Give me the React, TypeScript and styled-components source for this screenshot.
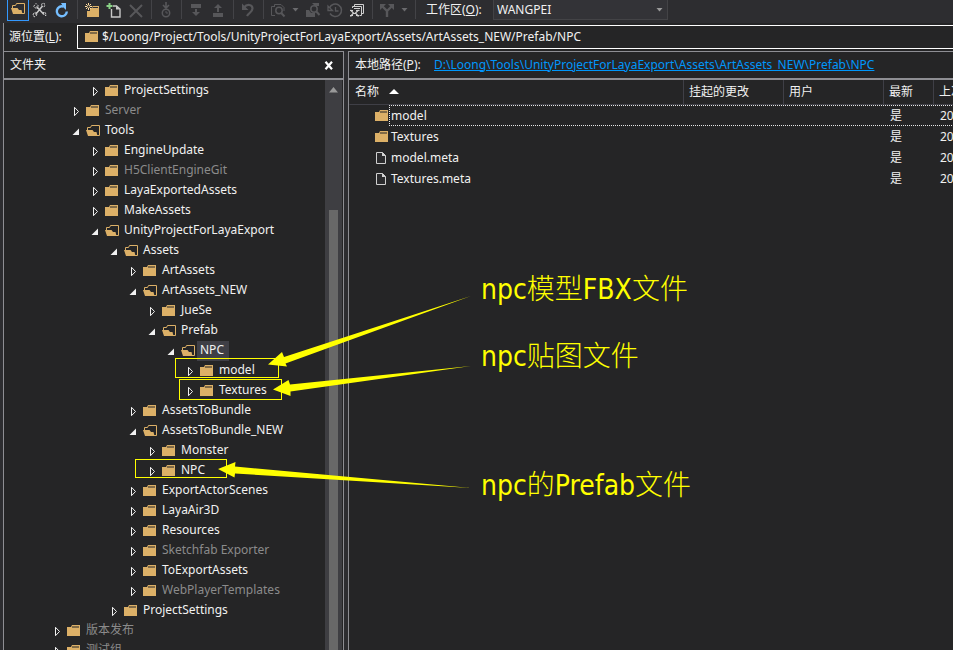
import React from "react";
import styled, { createGlobalStyle, css } from "styled-components";

const GlobalStyle = createGlobalStyle`
  * { box-sizing: border-box; }
  html, body { margin: 0; padding: 0; background: #252526; overflow: hidden; }
  body, button, input, select, table {
    font-family: "Noto Sans", "Noto Sans CJK SC", sans-serif;
    font-size: 12px;
    line-height: 16px;
    color: #f1f1f1;
  }
  button { border: 0; padding: 0; background: none; }
`;

const Shell = styled.div`
  position: relative;
  display: flex;
  flex-direction: column;
  height: 100vh;
  overflow: hidden;
  background: #2d2d30;
`;

const Toolbar = styled.div`
  display: flex;
  align-items: flex-start;
  flex: none;
  height: 23px;
  padding-left: 7px;
  overflow: hidden;
`;

const ToolButton = styled.button<{ $active?: boolean }>`
  display: flex;
  align-items: center;
  justify-content: center;
  flex: none;
  width: 22px;
  height: 19px;
  ${(p) =>
    p.$active &&
    css`
      height: 21px;
      padding-bottom: 2px;
      border: 1px solid #3399ff;
      border-top: 0;
    `}
`;

const CaretButton = styled(ToolButton)`
  width: 13px;
`;

const Separator = styled.span`
  flex: none;
  width: 1px;
  height: 19px;
  margin: 0 3px 0 4px;
  background: #434347;
`;

const WorkspaceLabel = styled.label`
  flex: none;
  width: 67px;
  margin-left: 7px;
  padding-top: 2px;
  white-space: nowrap;
`;

const SelectBox = styled.div`
  display: flex;
  align-items: center;
  flex: none;
  width: 175px;
  height: 20px;
  padding-right: 4px;
  background: #333337;
  border: 1px solid #434346;
  border-top: 0;
`;

const Select = styled.select`
  appearance: none;
  flex: 1;
  min-width: 0;
  padding: 0 3px;
  border: 0;
  outline: 0;
  background: transparent;
`;

const SourceBar = styled.div`
  display: flex;
  align-items: flex-start;
  flex: none;
  height: 28px;
  margin-left: 3px;
  padding: 2px 0 0 5px;
  border-left: 1px solid #8e8e93;
  background: #252526;
`;

const SourceLabel = styled.label`
  width: 68px;
  padding-top: 4px;
`;

const SourceField = styled.div`
  display: flex;
  align-items: center;
  flex: 1;
  gap: 3px;
  height: 24px;
  padding-left: 7px;
  border: 1px solid #ffffff;
  border-right: 0;
`;

const SourceInput = styled.input`
  flex: 1;
  min-width: 0;
  padding: 0;
  border: 0;
  outline: 0;
  background: transparent;
`;

const Panes = styled.div`
  display: flex;
  flex: 1;
  gap: 4px;
  min-height: 0;
  padding-left: 3px;
`;

const Pane = styled.section`
  display: flex;
  flex-direction: column;
  min-width: 0;
  border-left: 1px solid #8e8e93;
  border-top: 1px solid #8e8e93;
  background: #252526;
`;

const FolderPane = styled(Pane)`
  flex: none;
  width: 341px;
  border-right: 1px solid #8e8e93;
`;

const FilePane = styled(Pane)`
  flex: 1;
`;

const PaneHeader = styled.header`
  display: flex;
  align-items: center;
  flex: none;
  height: 28px;
  padding: 0 9px 1px 6px;
  border-bottom: 2px solid #8e8e93;
  white-space: nowrap;
`;

const PaneTitle = styled.h2`
  flex: 1;
  margin: 0;
  font-size: 12px;
  font-weight: 400;
`;

const CloseButton = styled.button`
  display: flex;
  padding-top: 2px;
`;

const PathLabel = styled.span`
  width: 79px;
`;

const PathLink = styled.a`
  color: #0097fb;
  text-decoration: underline;
`;

const TreeArea = styled.div`
  display: flex;
  flex: 1;
  min-height: 0;
  padding-right: 1px;
`;

const Tree = styled.ul`
  flex: 1;
  margin: 0;
  padding: 1px 0 0;
  overflow: hidden;
  list-style: none;
`;

const TreeItem = styled.li<{ $depth: number; $muted?: boolean }>`
  display: flex;
  align-items: center;
  height: 20px;
  padding-left: ${(p) => 49 + p.$depth * 19}px;
  color: ${(p) => (p.$muted ? "#8b8b8b" : "#f1f1f1")};
  white-space: nowrap;
`;

const Expander = styled.button`
  display: flex;
  width: 14px;
`;

const TreeName = styled.span<{ $selected?: boolean }>`
  height: 20px;
  padding: 1px 5px 0 3px;
  margin-left: 2px;
  background: ${(p) => (p.$selected ? "#3f3f46" : "transparent")};
`;

const ScrollTrack = styled.div`
  display: flex;
  flex-direction: column;
  align-items: center;
  width: 17px;
  padding-top: 7px;
  background: #3e3e42;
`;

const ScrollThumb = styled.div`
  flex: 1;
  width: 9px;
  margin-top: 117px;
  background: #686868;
`;

const FileTable = styled.table`
  width: 100%;
  table-layout: fixed;
  border-collapse: separate;
  border-spacing: 0;
`;

const HeadCell = styled.th<{ $width?: number }>`
  width: ${(p) => (p.$width ? `${p.$width}px` : "auto")};
  height: 25px;
  padding: 0 0 0 5px;
  border-left: 1px solid #3f3f46;
  border-bottom: 1px solid #3f3f46;
  font-weight: 400;
  text-align: left;
  white-space: nowrap;
  overflow: hidden;
  &:first-child { border-left-color: transparent; }
`;

const SortMark = styled.svg`
  margin-left: 10px;
  vertical-align: 2px;
`;

const Cell = styled.td<{ $focused?: boolean }>`
  height: 21px;
  padding: 0 0 0 7px;
  overflow: hidden;
  white-space: nowrap;
  ${(p) =>
    p.$focused &&
    css`
      background:
        repeating-linear-gradient(90deg, #e6e6e6 0 1px, transparent 1px 2px) 0 0 / 100% 1px no-repeat,
        repeating-linear-gradient(90deg, #e6e6e6 0 1px, transparent 1px 2px) 0 20px / 100% 1px no-repeat;
    `}
`;

const NameCell = styled(Cell)`
  padding: 0 0 0 26px;
  background: none;
`;

const NameBox = styled.div`
  display: flex;
  align-items: center;
  height: 21px;
`;

const FileName = styled.span<{ $focused?: boolean }>`
  flex: 1;
  height: 21px;
  padding: 3px 0 0 2px;
  ${(p) =>
    p.$focused &&
    css`
      background:
        repeating-linear-gradient(90deg, #e6e6e6 0 1px, transparent 1px 2px) 0 0 / 100% 1px no-repeat,
        repeating-linear-gradient(90deg, #e6e6e6 0 1px, transparent 1px 2px) 0 20px / 100% 1px no-repeat,
        repeating-linear-gradient(180deg, #e6e6e6 0 1px, transparent 1px 2px) 0 0 / 1px 100% no-repeat;
    `}
`;

const Markup = styled.svg`
  position: absolute;
  left: 0;
  top: 0;
  pointer-events: none;
`;

const Callout = styled.p<{ $x: number; $y: number }>`
  position: absolute;
  left: ${(p) => p.$x}px;
  top: ${(p) => p.$y}px;
  margin: 0;
  color: #ffff00;
  font-family: "DejaVu Sans Condensed", "Noto Sans", sans-serif;
  font-size: 28px;
  line-height: 40px;
  white-space: nowrap;
`;

const Thin = styled.span`
  font-family: "Noto Sans CJK SC Light", "Noto Sans CJK SC", sans-serif;
  font-weight: 300;
`;

const GOLD = "#dcb067";

const FolderClosed = () => (
  <svg width="14" height="12" viewBox="0 0 14 12" aria-hidden="true">
    <path d="M0 2H4L5 0H13V11H0Z" fill={GOLD} />
    <path d="M5 1.5H12V2.5H5Z" fill="#252526" />
  </svg>
);

const FolderOpen = () => (
  <svg width="14" height="12" viewBox="0 0 14 12" aria-hidden="true">
    <path d="M1.5 6V2.500H4.500L5.500 .5H13.500V10.500H11" fill="none" stroke={GOLD} />
    <path d="M0 5H6.500L8 7H10.500L11.500 11H2Z" fill={GOLD} />
  </svg>
);

const FileIcon = () => (
  <svg width="14" height="12" viewBox="0 0 14 12" aria-hidden="true">
    <path d="M1.5 .5H7.5L10.5 3.5V11.5H1.5Z" fill="#2b2b2d" stroke="#d0d0d0" />
    <path d="M7 0V4H11Z" fill="#d0d0d0" />
  </svg>
);

const Caret = ({ color = "#999999" }: { color?: string }) => (
  <svg width="7" height="4" viewBox="0 0 7 4" aria-hidden="true">
    <path d="M.5 0H6.5L3.5 3.5Z" fill={color} />
  </svg>
);

const Twisty = ({ open }: { open?: boolean }) => (
  <svg width="8" height="10" viewBox="0 0 8 10" aria-hidden="true">
    {open ? (
      <path d="M7 2.500V9H.5Z" fill="#f1f1f1" />
    ) : (
      <path d="M2.500 1.300V9.700L6.500 5.500Z" fill="none" stroke="#f1f1f1" />
    )}
  </svg>
);

const Icon = ({ children }: { children: React.ReactNode }) => (
  <svg width="16" height="16" viewBox="0 0 16 16" fill="none" aria-hidden="true">
    {children}
  </svg>
);

const DIM = "#57575a";

const ToolsIcon = () => (
  <Icon>
    <path d="M3.500 12.500L10.500 4M4.500 4.500L12 12.500" stroke="#c8c8c8" strokeWidth="1.5" />
    <path d="M1.5 4.5L4 1.5L6.500 4L5 7ZM9 2.5L12 1L13 4L11 5ZM10.500 10.500L13.500 10.500L14 14ZM1 12L4 10L5 13L2 15Z" stroke="#c8c8c8" strokeDasharray="2 1" />
  </Icon>
);

const RefreshIcon = () => (
  <Icon>
    <path d="M12.8 9.5A5 5 0 1 1 9.5 4.6" stroke="#75beff" strokeWidth="2.4" />
    <path d="M7 1H12V8L9.5 5.5Z" fill="#75beff" />
  </Icon>
);

const NewFolderIcon = () => (
  <Icon>
    <path d="M3 9V15H15V4H8.500V6H6V9Z" fill={GOLD} />
    <path d="M9 5.500H14" stroke="#2d2d30" />
    <path d="M4.500 1V8M1 4.500H8M2 2L7 7M7 2L2 7" stroke="#ffdda0" />
    <circle cx="4.500" cy="4.500" r="1.2" fill="#2d2d30" />
  </Icon>
);

const NewFileIcon = () => (
  <Icon>
    <path d="M5.5 7V15H14V7L10.5 4H7" stroke="#c8c8c8" strokeWidth="1.4" />
    <path d="M10 3.500V7.500H14Z" fill="#c8c8c8" />
    <path d="M3.5 1V7M.5 4H6.500" stroke="#89d185" strokeWidth="2" />
  </Icon>
);

const DeleteIcon = () => (
  <Icon>
    <path d="M2 3L14 15M14 3L2 15" stroke={DIM} strokeWidth="2" />
  </Icon>
);

const PendingIcon = () => (
  <Icon>
    <circle cx="8" cy="11" r="3.7" stroke={DIM} strokeWidth="1.5" />
    <path d="M8 9V11H10" stroke={DIM} />
    <path d="M8 0V5M5 3L8 6L11 3" stroke={DIM} strokeWidth="1.6" />
  </Icon>
);

const GetIcon = () => (
  <Icon>
    <path d="M3 2H13V6H3ZM7 7H9V10H12L8 14L4 10H7Z" fill={DIM} />
  </Icon>
);

const CheckInIcon = () => (
  <Icon>
    <path d="M3 11H13V15H3ZM8 2L12 6H9V10H7V6H4Z" fill={DIM} />
  </Icon>
);

const UndoIcon = () => (
  <Icon>
    <path d="M4 5.500C7 1.500 12.500 2.500 12.5 6.500C12.500 10 8.500 11 7 14" stroke={DIM} strokeWidth="2.2" />
    <path d="M2 1.500V8H8.500Z" fill={DIM} />
  </Icon>
);

const FindIcon = () => (
  <Icon>
    <path d="M5 13.500H1.5V4.5H4M4.5 5V2.5H11L14 5.5V9" stroke={DIM} />
    <circle cx="9" cy="8.5" r="3.2" stroke={DIM} strokeWidth="1.5" />
    <path d="M11.3 11L14.5 14.5" stroke={DIM} strokeWidth="2" />
  </Icon>
);

const FindFolderIcon = () => (
  <Icon>
    <path d="M1 8H4L6 11H10V15H1ZM7 1H14V4H10Z" fill={DIM} />
    <circle cx="9" cy="7" r="3.2" stroke={DIM} strokeWidth="1.5" />
    <path d="M11.3 9.5L14.5 13" stroke={DIM} strokeWidth="2" />
  </Icon>
);

const HistoryIcon = () => (
  <Icon>
    <path d="M2.500 6A6.200 6.200 0 1 1 3 11.500" stroke={DIM} strokeWidth="1.5" />
    <path d="M1 4V8.500H5.500ZM8.500 5V9H11.500" stroke={DIM} strokeWidth="1.3" />
  </Icon>
);

const CompareIcon = () => (
  <Icon>
    <path d="M3.5 6V4.500H12.500V13.500H11M5.500 4V2.500H14.500V11.500H13" stroke="#d0d0d0" />
    <path d="M5 6.500H11" stroke="#d0d0d0" />
    <path d="M1.500 8L4.500 11L1.500 14.500M9.500 8L6.500 11L9.500 14.500M1 8.500H4M7 8.500H10.500M4 11.500H7M1 13.500H4M7 13.500H10.500" stroke="#d0d0d0" strokeWidth="1.2" />
  </Icon>
);

const BranchIcon = () => (
  <Icon>
    <path d="M8 15V9L3.5 4.5M8 9L12.5 4.5" stroke={DIM} strokeWidth="2.4" />
    <path d="M1 2H7L1 8ZM9 2H15V8Z" fill={DIM} />
  </Icon>
);

type Node = { name: string; depth: number; open?: boolean; muted?: boolean; selected?: boolean };

const nodes: Node[] = [
  { name: "ProjectSettings", depth: 2 },
  { name: "Server", depth: 1, muted: true },
  { name: "Tools", depth: 1, open: true },
  { name: "EngineUpdate", depth: 2 },
  { name: "H5ClientEngineGit", depth: 2, muted: true },
  { name: "LayaExportedAssets", depth: 2 },
  { name: "MakeAssets", depth: 2 },
  { name: "UnityProjectForLayaExport", depth: 2, open: true },
  { name: "Assets", depth: 3, open: true },
  { name: "ArtAssets", depth: 4 },
  { name: "ArtAssets_NEW", depth: 4, open: true },
  { name: "JueSe", depth: 5 },
  { name: "Prefab", depth: 5, open: true },
  { name: "NPC", depth: 6, open: true, selected: true },
  { name: "model", depth: 7 },
  { name: "Textures", depth: 7 },
  { name: "AssetsToBundle", depth: 4 },
  { name: "AssetsToBundle_NEW", depth: 4, open: true },
  { name: "Monster", depth: 5 },
  { name: "NPC", depth: 5 },
  { name: "ExportActorScenes", depth: 4 },
  { name: "LayaAir3D", depth: 4 },
  { name: "Resources", depth: 4 },
  { name: "Sketchfab Exporter", depth: 4, muted: true },
  { name: "ToExportAssets", depth: 4 },
  { name: "WebPlayerTemplates", depth: 4, muted: true },
  { name: "ProjectSettings", depth: 3 },
  { name: "版本发布", depth: 0, muted: true },
  { name: "测试组", depth: 0, muted: true },
];

const files = [
  { name: "model", folder: true },
  { name: "Textures", folder: true },
  { name: "model.meta", folder: false },
  { name: "Textures.meta", folder: false },
];

export default function App() {
  return (
    <>
      <GlobalStyle />
      <Shell>
        <Toolbar role="toolbar">
          <ToolButton $active aria-label="Folders"><FolderOpen /></ToolButton>
          <ToolButton aria-label="Tools"><ToolsIcon /></ToolButton>
          <ToolButton aria-label="Refresh"><RefreshIcon /></ToolButton>
          <Separator />
          <ToolButton aria-label="New folder"><NewFolderIcon /></ToolButton>
          <ToolButton aria-label="Add items"><NewFileIcon /></ToolButton>
          <ToolButton aria-label="Delete" disabled><DeleteIcon /></ToolButton>
          <Separator />
          <ToolButton aria-label="Get latest" disabled><PendingIcon /></ToolButton>
          <Separator />
          <ToolButton aria-label="Check out" disabled><GetIcon /></ToolButton>
          <ToolButton aria-label="Check in" disabled><CheckInIcon /></ToolButton>
          <Separator />
          <ToolButton aria-label="Undo" disabled><UndoIcon /></ToolButton>
          <Separator />
          <ToolButton aria-label="Find" disabled><FindIcon /></ToolButton>
          <CaretButton aria-label="Find options" disabled><Caret color="#6a6a6d" /></CaretButton>
          <ToolButton aria-label="Find in folder" disabled><FindFolderIcon /></ToolButton>
          <ToolButton aria-label="History" disabled><HistoryIcon /></ToolButton>
          <ToolButton aria-label="Compare"><CompareIcon /></ToolButton>
          <Separator />
          <ToolButton aria-label="Branch" disabled><BranchIcon /></ToolButton>
          <CaretButton aria-label="Branch options" disabled><Caret color="#6a6a6d" /></CaretButton>
          <Separator />
          <WorkspaceLabel htmlFor="workspace">工作区(<u>O</u>):</WorkspaceLabel>
          <SelectBox>
            <Select id="workspace" defaultValue="WANGPEI">
              <option>WANGPEI</option>
            </Select>
            <Caret />
          </SelectBox>
        </Toolbar>

        <SourceBar>
          <SourceLabel htmlFor="source">源位置(<u>L</u>):</SourceLabel>
          <SourceField>
            <FolderClosed />
            <SourceInput
              id="source"
              readOnly
              value="$/Loong/Project/Tools/UnityProjectForLayaExport/Assets/ArtAssets_NEW/Prefab/NPC"
            />
          </SourceField>
        </SourceBar>

        <Panes>
          <FolderPane>
            <PaneHeader>
              <PaneTitle>文件夹</PaneTitle>
              <CloseButton aria-label="Close">
                <svg width="10" height="9" viewBox="0 0 10 9" aria-hidden="true">
                  <path d="M1.5 .8L8 8.2M8 .8L1.5 8.2" stroke="#ffffff" strokeWidth="2.2" />
                </svg>
              </CloseButton>
            </PaneHeader>
            <TreeArea>
              <Tree role="tree">
                {nodes.map((n, i) => (
                  <TreeItem key={i} role="treeitem" $depth={n.depth} $muted={n.muted}>
                    <Expander aria-label={n.open ? "Collapse" : "Expand"}>
                      <Twisty open={n.open} />
                    </Expander>
                    {n.open ? <FolderOpen /> : <FolderClosed />}
                    <TreeName $selected={n.selected}>{n.name}</TreeName>
                  </TreeItem>
                ))}
              </Tree>
              <ScrollTrack>
                <svg width="9" height="6" viewBox="0 0 9 6" aria-hidden="true">
                  <path d="M0 5.5L4.5 0L9 5.5Z" fill="#999999" />
                </svg>
                <ScrollThumb />
              </ScrollTrack>
            </TreeArea>
          </FolderPane>

          <FilePane>
            <PaneHeader>
              <PathLabel>本地路径(<u>P</u>):</PathLabel>
              <PathLink href="#local">
                D:\Loong\Tools\UnityProjectForLayaExport\Assets\ArtAssets_NEW\Prefab\NPC
              </PathLink>
            </PaneHeader>
            <FileTable>
              <thead>
                <tr>
                  <HeadCell $width={334}>
                    名称
                    <SortMark width="10" height="5" viewBox="0 0 10 5" aria-hidden="true">
                      <path d="M0 5L5 0L10 5Z" fill="#ffffff" />
                    </SortMark>
                  </HeadCell>
                  <HeadCell $width={100}>挂起的更改</HeadCell>
                  <HeadCell $width={100}>用户</HeadCell>
                  <HeadCell $width={50}>最新</HeadCell>
                  <HeadCell>上次</HeadCell>
                </tr>
              </thead>
              <tbody>
                {files.map((f, i) => (
                  <tr key={f.name}>
                    <NameCell>
                      <NameBox>
                        {f.folder ? <FolderClosed /> : <FileIcon />}
                        <FileName $focused={i === 0}>{f.name}</FileName>
                      </NameBox>
                    </NameCell>
                    <Cell $focused={i === 0} />
                    <Cell $focused={i === 0} />
                    <Cell $focused={i === 0}>是</Cell>
                    <Cell $focused={i === 0}>20</Cell>
                  </tr>
                ))}
              </tbody>
            </FileTable>
          </FilePane>
        </Panes>

        <Markup width="480" height="500" viewBox="0 0 480 500" aria-hidden="true">
          <g fill="none" stroke="#ffff00">
            <rect x="175.5" y="358.5" width="103" height="19" />
            <rect x="179.5" y="379.5" width="102" height="20" />
            <rect x="135.5" y="459.5" width="91" height="18" />
          </g>
          <g fill="#ffff00">
            <path d="M268 364.500L282 352L284 357L471 296L285.500 363.500L287 366.500Z" />
            <path d="M273 389.500L288.500 380L290 384.500L471 366L290.500 391.500L290.500 396Z" />
            <path d="M218 469L235.500 462L235 466.500L471 488L235 473.500L234.500 477.500Z" />
          </g>
        </Markup>
        <Callout $x={481} $y={267}>npc<Thin>模型</Thin>FBX<Thin>文件</Thin></Callout>
        <Callout $x={481} $y={334}>npc<Thin>贴图文件</Thin></Callout>
        <Callout $x={481} $y={463}>npc<Thin>的</Thin>Prefab<Thin>文件</Thin></Callout>
      </Shell>
    </>
  );
}
